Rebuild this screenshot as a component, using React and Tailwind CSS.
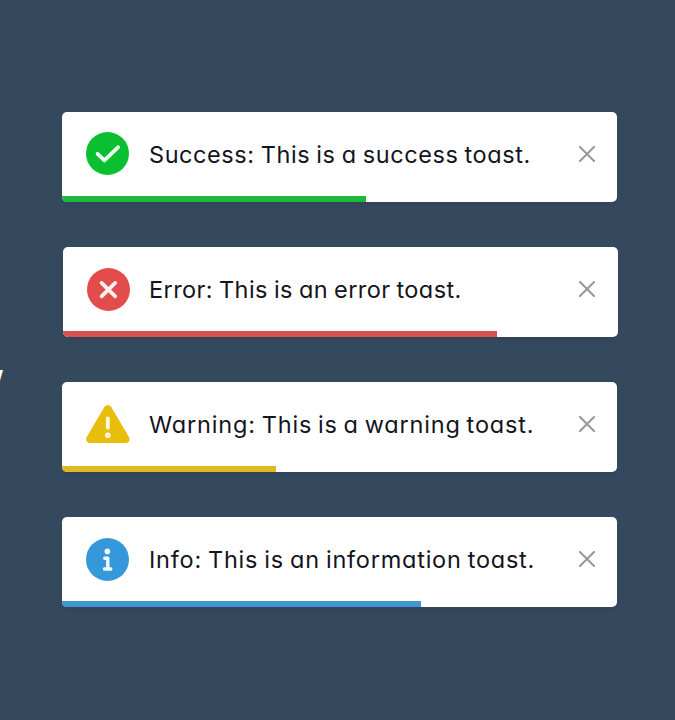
import React from "react";

function SuccessIcon() {
  return (
    <svg width="43" height="43" viewBox="0 0 43 43" fill="none">
      <circle cx="21.5" cy="21.5" r="21.5" fill="#0abf30" />
      <path d="M11.6 21.8 L18.4 28.4 L32.2 15.2" stroke="#effbef" strokeWidth="3.8" strokeLinecap="round" strokeLinejoin="round" />
    </svg>
  );
}

function ErrorIcon() {
  return (
    <svg width="43" height="43" viewBox="0 0 43 43" fill="none">
      <circle cx="21.5" cy="21.5" r="21.5" fill="#e24d4c" />
      <path d="M14.6 14.9 L28.2 28.3 M28.2 14.9 L14.6 28.3" stroke="#fff1ef" strokeWidth="3.8" strokeLinecap="round" />
    </svg>
  );
}

function WarningIcon() {
  return (
    <svg width="44" height="38" viewBox="0 0 44 38" fill="none">
      <path d="M18.5 1.8 Q21.8 -1.8 25.1 1.8 L43.1 32.3 Q44.8 37 40.2 38 H3.6 Q-1 37 0.6 32.3 Z" fill="#e9bd0c" />
      <path d="M21.8 13.3 V22.7" stroke="#fffbe8" strokeWidth="3.8" strokeLinecap="round" />
      <circle cx="21.8" cy="30.2" r="2.8" fill="#fffbe8" />
    </svg>
  );
}

function InfoIcon() {
  return (
    <svg width="43" height="43" viewBox="0 0 43 43" fill="none">
      <circle cx="21.5" cy="21.5" r="21.5" fill="#3498db" />
      <circle cx="21.4" cy="13.4" r="2.8" fill="#f0fbff" />
      <path d="M18.7 20.2 H21.8 V30.6 M18.4 31 H24.8" stroke="#f0fbff" strokeWidth="3.4" strokeLinecap="round" strokeLinejoin="round" />
    </svg>
  );
}

function CloseIcon() {
  return (
    <svg width="16" height="16" viewBox="0 0 16 16" fill="none">
      <path d="M1 1 L15 15 M15 1 L1 15" stroke="#999" strokeWidth="2.1" strokeLinecap="round" />
    </svg>
  );
}

const toasts = [
  { text: "Success: This is a success toast.", Icon: SuccessIcon, card: "", pad: "pr-[22px]", icon: "w-[43px] pb-[1px]", label: "ml-5 tracking-[0.56px] [word-spacing:-1px]", bar: "w-[304px] bg-[#1cb83c]" },
  { text: "Error: This is an error toast.", Icon: ErrorIcon, card: "ml-px", pad: "pr-[23px]", icon: "w-[43px] pt-[1px]", label: "ml-[19px] tracking-[0.4px] [word-spacing:-0.9px]", bar: "w-[433.5px] bg-[#da5050]" },
  { text: "Warning: This is a warning toast.", Icon: WarningIcon, card: "", pad: "pr-[22px]", icon: "w-11", label: "ml-[19px] tracking-[0.83px] [word-spacing:-1.6px]", bar: "w-[213.5px] bg-[#e0b822]" },
  { text: "Info: This is an information toast.", Icon: InfoIcon, card: "", pad: "pr-[22px]", icon: "w-[43px] pt-[1px]", label: "ml-5 tracking-[0.77px] [word-spacing:-1.3px]", bar: "w-[359px] bg-[#3f96d2]" },
];

function Toast({ text, Icon, card, pad, icon, label, bar }) {
  return (
    <li className={`flex h-[90px] w-[555px] flex-col overflow-hidden rounded-[5px] bg-white shadow-[0_4px_8px_-5px_rgba(0,0,0,0.2)] ${card}`}>
      <div className={`flex h-[84px] items-center pl-6 ${pad}`}>
        <span className={`flex shrink-0 ${icon}`}><Icon /></span>
        <span className={`flex-1 pt-0.5 whitespace-nowrap text-[23.5px] leading-none text-[#141420] [font-feature-settings:'cv11'] ${label}`}>{text}</span>
        <button className="flex" aria-label="Close"><CloseIcon /></button>
      </div>
      <div className={`h-1.5 ${bar}`} />
    </li>
  );
}

export default function App() {
  return (
    <main className="relative h-[720px] w-[675px] overflow-hidden bg-[#34495e] pt-28 pl-[62px] font-['Inter','Open_Sans',sans-serif]">
      <span className="absolute top-[343px] -left-[6px] text-[36px] leading-none font-bold text-white">,</span>
      <ul className="flex flex-col gap-[45px]">
        {toasts.map((toast) => <Toast key={toast.text} {...toast} />)}
      </ul>
    </main>
  );
}
